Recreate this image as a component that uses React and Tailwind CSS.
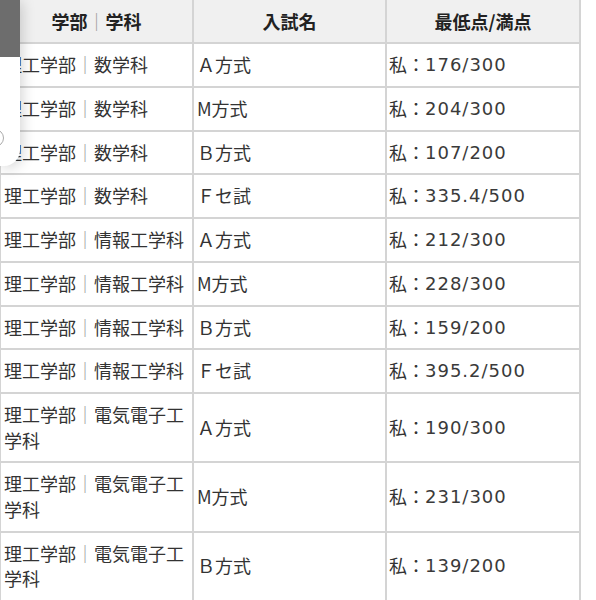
const rows = [
  ["理工学部", "数学科", "Ａ方式", "176/300"],
  ["理工学部", "数学科", "M方式", "204/300"],
  ["理工学部", "数学科", "Ｂ方式", "107/200"],
  ["理工学部", "数学科", "Ｆセ試", "335.4/500"],
  ["理工学部", "情報工学科", "Ａ方式", "212/300"],
  ["理工学部", "情報工学科", "M方式", "228/300"],
  ["理工学部", "情報工学科", "Ｂ方式", "159/200"],
  ["理工学部", "情報工学科", "Ｆセ試", "395.2/500"],
  ["理工学部", "電気電子工学科", "Ａ方式", "190/300"],
  ["理工学部", "電気電子工学科", "M方式", "231/300"],
  ["理工学部", "電気電子工学科", "Ｂ方式", "139/200"],
];

export default function App() {
  return (
    <div className="relative w-[596px] h-[600px] overflow-hidden bg-white font-['Noto_Sans_CJK_JP',sans-serif] text-[18px] text-[#333]">
      <div className="ml-[-1px] w-[582px] border-l-2 border-r-2 border-[#d4d4d4]">
        <div className="grid grid-cols-[193px_193px_192px] h-[44px] border-b-2 border-[#d4d4d4] bg-[#f0f0f0] font-bold text-[#222]">
          <div className="flex items-center justify-center border-r-2 border-[#d4d4d4]">
            <span>学部<span className="font-normal text-[#999]">｜</span>学科</span>
          </div>
          <div className="flex items-center justify-center border-r-2 border-[#d4d4d4]">入試名</div>
          <div className="flex items-center justify-center">最低点/満点</div>
        </div>
        {rows.map((r, i) => (
          <div key={i} className="grid grid-cols-[193px_193px_192px] border-b-2 border-[#d4d4d4] leading-[25.5px]">
            <div className="flex items-center px-[3px] py-[8.125px] border-r-2 border-[#d4d4d4]">
              <span>
                {r[0]}
                <span className="text-[#999]">｜</span>
                {r[1]}
              </span>
            </div>
            <div className="flex items-center pl-[3px] py-[8.125px] border-r-2 border-[#d4d4d4]">{r[2]}</div>
            <div className="flex items-center pl-[2px] py-[8.125px]">
              <span>私：</span>
              <span className="font-['DejaVu_Sans',sans-serif] tracking-[1px] text-[#3a3a3a]">{r[3]}</span>
            </div>
          </div>
        ))}
      </div>
      <div className="absolute left-0 top-0 w-[20px] h-[166px] overflow-hidden rounded-br-[16px] bg-white shadow-[2px_2px_14px_rgba(0,0,0,0.18)]">
        <div className="h-[57px] bg-[#6d6d6d]" />
        <div className="absolute left-[-14px] top-[129px] w-[18px] h-[18px] rounded-full border border-[#aaaaaa]" />
      </div>
    </div>
  );
}
